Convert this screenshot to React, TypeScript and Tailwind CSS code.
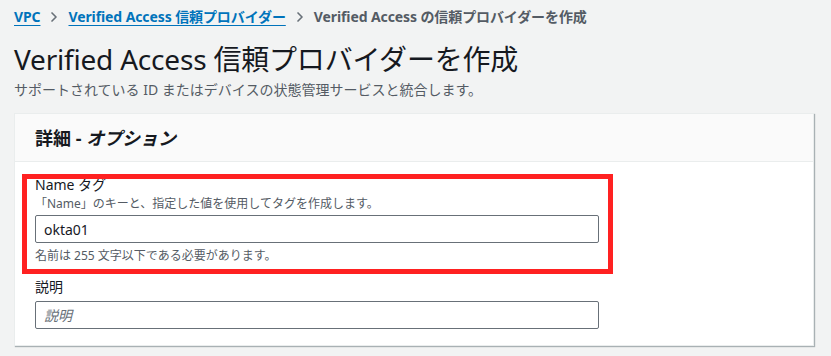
import { ChevronRight } from 'lucide-react';

const font = { fontFamily: '"Noto Sans", "Noto Sans CJK JP", sans-serif' };

function Crumb({ children }: { children: React.ReactNode }) {
  return (
    <a className="font-bold text-[#0073bb] underline underline-offset-[3px] decoration-1">{children}</a>
  );
}

export default function App() {
  return (
    <div className="w-[831px] h-[356px] bg-[#f2f3f3] px-[14px] pt-[7px] overflow-hidden text-[#16191f]" style={font}>
      <nav className="flex items-center text-[14px] leading-5 tracking-[-0.1px]">
        <Crumb>VPC</Crumb>
        <ChevronRight className="w-4 h-4 mx-[6px] text-[#687078]" strokeWidth={2.5} />
        <Crumb>Verified Access 信頼プロバイダー</Crumb>
        <ChevronRight className="w-4 h-4 mx-[6px] text-[#687078]" strokeWidth={2.5} />
        <span className="font-bold text-[#545b64]">Verified Access の信頼プロバイダーを作成</span>
      </nav>

      <h1 className="mt-[14px] text-[28px] leading-9 font-normal tracking-[-0.2px]">
        Verified Access 信頼プロバイダーを作成
      </h1>
      <p className="text-[14px] leading-5 text-[#545b64] mt-[3px]">
        サポートされている ID またはデバイスの状態管理サービスと統合します。
      </p>

      <section className="relative mt-[13px] w-[800px] bg-white border border-[#eaeded] shadow-[1px_1px_1px_0_rgba(0,28,36,0.3)]">
        <header className="h-[48px] flex items-center px-5 bg-[#fafafa] border-b border-[#eaeded]">
          <h2 className="text-[18px] font-bold leading-6">
            詳細 - <i>オプション</i>
          </h2>
        </header>

        <div className="px-5 pt-[13px] pb-4 flex flex-col">
          <label className="text-[14px] leading-5">Name タグ</label>
          <p className="text-[12px] leading-4 text-[#545b64] mt-[1px]">「Name」のキーと、指定した値を使用してタグを作成します。</p>
          <div className="mt-[3px] w-[564px] h-[28px] border border-[#687078] rounded-[2px] flex items-center px-2 text-[14px]">
            okta01
          </div>
          <p className="text-[12px] leading-4 text-[#545b64] mt-[5px]">名前は 255 文字以下である必要があります。</p>

          <label className="text-[14px] leading-5 mt-[13px]">説明</label>
          <div className="mt-[4px] w-[564px] h-[28px] border border-[#687078] rounded-[2px] flex items-center px-2 text-[14px] italic text-[#687078]">
            説明
          </div>
        </div>

        <div className="absolute left-[7px] top-[60px] w-[591px] h-[100px] border-[5px] border-[#ff2121] pointer-events-none" />
      </section>
    </div>
  );
}
